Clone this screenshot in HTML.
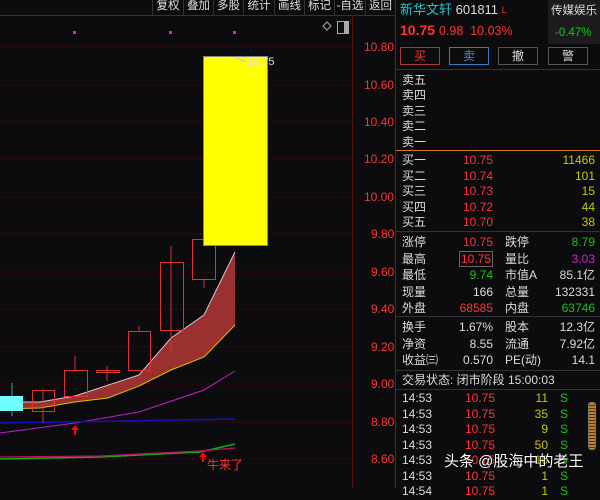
<!DOCTYPE html>
<html><head><meta charset="utf-8"><style>
*{margin:0;padding:0;box-sizing:border-box}
body{width:600px;height:488px;background:#0c0c0f;overflow:hidden;position:relative;font-family:"Liberation Sans","Noto Sans CJK SC",sans-serif;font-size:12px;color:#ddd}
.a{position:absolute;white-space:nowrap;line-height:14px}
.r{color:#ff3333}.g{color:#16c416}.y{color:#c8c800}.w{color:#dcdcdc}.m{color:#d020d0}
.tb{position:absolute;top:0;height:15px;border-left:1px solid #333;color:#ddd;font-size:11.5px;line-height:13px;text-align:center}
.btn{position:absolute;top:47px;height:18px;width:40px;border:1px solid #555;text-align:center;line-height:16px;font-size:12px}
.hl{position:absolute;left:396px;width:204px;height:1px;background:#333}
.rt{text-align:right}
</style></head><body>
<svg width="396" height="488" style="position:absolute;left:0;top:0">
<line x1="0" y1="15.5" x2="395" y2="15.5" stroke="#333"/>
<g stroke="#6a1010" stroke-dasharray="1,3">
<line x1="0" y1="47" x2="352" y2="47"/><line x1="0" y1="85" x2="352" y2="85"/><line x1="0" y1="122" x2="352" y2="122"/><line x1="0" y1="159" x2="352" y2="159"/><line x1="0" y1="197" x2="352" y2="197"/><line x1="0" y1="234" x2="352" y2="234"/><line x1="0" y1="272" x2="352" y2="272"/><line x1="0" y1="309" x2="352" y2="309"/><line x1="0" y1="347" x2="352" y2="347"/><line x1="0" y1="384" x2="352" y2="384"/><line x1="0" y1="422" x2="352" y2="422"/><line x1="0" y1="459" x2="352" y2="459"/>
</g>
<line x1="352.5" y1="15" x2="352.5" y2="488" stroke="#5a1010"/>
<rect x="73" y="31" width="3" height="3" fill="#e020e0"/><rect x="169" y="31" width="3" height="3" fill="#e020e0"/><rect x="233" y="31" width="3" height="3" fill="#e020e0"/>
<path d="M327 22 l4 4 -4 4 -4 -4z" fill="none" stroke="#aaa"/>
<rect x="337.5" y="21.5" width="11" height="12" fill="none" stroke="#aaa"/><rect x="344" y="22" width="4" height="11" fill="#aaa"/>
<polygon points="0,402 40,402 75,396 139,375 171,338 204,315 235,252 235,325 204,357 171,370 139,386 108,398 75,402 40,408 0,409" fill="#9a3030"/>
<polyline points="0,402 40,402 75,396 139,375 171,338 204,315 235,252" fill="none" stroke="#ccc" stroke-width="1"/>
<polyline points="0,409 40,408 75,402 108,398 139,386 171,370 204,357 235,325" fill="none" stroke="#d8c000" stroke-width="1"/>
<polyline points="0,433 75,423 139,412 204,390 235,371" fill="none" stroke="#c020c0" stroke-width="1"/>
<line x1="0" y1="423" x2="235" y2="419" stroke="#1010c0" stroke-width="1.5"/>
<polyline points="0,459 100,457 200,452 235,444" fill="none" stroke="#10b010" stroke-width="1.5"/>
<polyline points="0,457 100,456 200,451 235,448" fill="none" stroke="#c01060" stroke-width="1.2"/>
<line x1="12" y1="383" x2="12" y2="416" stroke="#3aa"/><rect x="0" y="396" width="23" height="15" fill="#70ffff"/>
<line x1="43" y1="389" x2="43" y2="423" stroke="#c33"/><rect x="32.5" y="390.5" width="22" height="21" fill="none" stroke="#d33"/>
<line x1="75" y1="356" x2="75" y2="370" stroke="#c33"/><rect x="64.5" y="370.5" width="23" height="26" fill="none" stroke="#d33"/>
<line x1="107" y1="366" x2="107" y2="381" stroke="#c33"/><rect x="96.5" y="370.5" width="23" height="2" fill="none" stroke="#d33"/>
<line x1="139" y1="326" x2="139" y2="331" stroke="#c33"/><rect x="128.5" y="331.5" width="22" height="39" fill="none" stroke="#d33"/>
<line x1="171" y1="246" x2="171" y2="353" stroke="#c33"/><rect x="160.5" y="262.5" width="23" height="68" fill="none" stroke="#d33"/>
<line x1="204" y1="279" x2="204" y2="288" stroke="#c33"/><rect x="192.5" y="239.5" width="23" height="40" fill="none" stroke="#d33"/>
<rect x="203.5" y="56.5" width="64" height="189" fill="#ffff00" stroke="#887"/>
<path d="M236 58 l10 4" stroke="#ccc"/>
<path d="M75 425 l-4 5 h3 v5 h2 v-5 h3z" fill="#f00"/>
<path d="M203 452 l-4 5 h3 v5 h2 v-5 h3z" fill="#f00"/>
</svg>
<div class="a w" style="left:247px;top:55px;font-size:11px">10.75</div>
<div class="a r" style="left:207px;top:458px">牛来了</div>
<div class="a r" style="left:364px;top:40px">10.80</div>
<div class="a r" style="left:364px;top:78px">10.60</div>
<div class="a r" style="left:364px;top:115px">10.40</div>
<div class="a r" style="left:364px;top:152px">10.20</div>
<div class="a r" style="left:364px;top:190px">10.00</div>
<div class="a r" style="left:371px;top:227px">9.80</div>
<div class="a r" style="left:371px;top:265px">9.60</div>
<div class="a r" style="left:371px;top:302px">9.40</div>
<div class="a r" style="left:371px;top:340px">9.20</div>
<div class="a r" style="left:371px;top:377px">9.00</div>
<div class="a r" style="left:371px;top:415px">8.80</div>
<div class="a r" style="left:371px;top:452px">8.60</div>
<div class="tb" style="left:152px;width:31px">复权</div>
<div class="tb" style="left:183px;width:30px">叠加</div>
<div class="tb" style="left:213px;width:30px">多股</div>
<div class="tb" style="left:243px;width:31px">统计</div>
<div class="tb" style="left:274px;width:30px">画线</div>
<div class="tb" style="left:304px;width:30px">标记</div>
<div class="tb" style="left:334px;width:31px">-自选</div>
<div class="tb" style="left:365px;width:30px">返回</div>
<div style="position:absolute;left:395px;top:0;width:1px;height:488px;background:#333"></div>
<div class="a" style="left:400px;top:3px;font-size:13px;color:#22c8c8">新华文轩 <span class="w">601811</span> <span class="r" style="font-size:9px;vertical-align:top">L</span></div>
<div style="position:absolute;left:548px;top:0;width:52px;height:44px;background:#1c1c1e"></div>
<div class="a w" style="left:551px;top:4px;font-size:11.5px">传媒娱乐</div>
<div class="a g" style="left:555px;top:26px;font-size:11.5px">-0.47%</div>
<div class="a r" style="left:400px;top:23px;font-size:14px;font-weight:bold">10.75 <span style="font-weight:normal;font-size:12.5px">0.98 &nbsp;10.03%</span></div>
<div class="btn r" style="left:400px;border-color:#a33">买</div>
<div class="btn" style="left:449px;border-color:#3a7ac0;color:#4a8ad0">卖</div>
<div class="btn w" style="left:498px">撤</div>
<div class="btn w" style="left:548px;width:40px">警</div>
<div class="hl" style="top:69px"></div>
<div class="a w" style="left:402px;top:73px">卖五</div>
<div class="a w" style="left:402px;top:88px">卖四</div>
<div class="a w" style="left:402px;top:104px">卖三</div>
<div class="a w" style="left:402px;top:119px">卖二</div>
<div class="a w" style="left:402px;top:135px">卖一</div>
<div class="hl" style="top:150px;background:#d08010"></div>
<div class="a w" style="left:402px;top:153px;line-height:15.6px">买一<br>买二<br>买三<br>买四<br>买五</div>
<div class="a r rt" style="left:440px;width:53px;top:153px;line-height:15.6px">10.75<br>10.74<br>10.73<br>10.72<br>10.70</div>
<div class="a y rt" style="left:540px;width:55px;top:153px;line-height:15.6px">11466<br>101<br>15<br>44<br>38</div>
<div class="hl" style="top:231px"></div>
<div class="a w" style="left:402px;top:234px;line-height:16.5px">涨停<br>最高<br>最低<br>现量<br>外盘</div>
<div class="a rt" style="left:440px;width:53px;top:234px;line-height:16.5px"><span class="r">10.75</span><br><span class="r" style="border:1px solid #666;padding:0 1px">10.75</span><br><span class="g">9.74</span><br><span class="w">166</span><br><span class="r">68585</span></div>
<div class="a w" style="left:505px;top:234px;line-height:16.5px">跌停<br>量比<br>市值A<br>总量<br>内盘</div>
<div class="a rt" style="left:530px;width:65px;top:234px;line-height:16.5px"><span class="g">8.79</span><br><span class="m">3.03</span><br><span class="w">85.1亿</span><br><span class="w">132331</span><br><span class="g">63746</span></div>
<div class="hl" style="top:316px"></div>
<div class="a w" style="left:402px;top:319px;line-height:16.5px">换手<br>净资<br>收益㈢</div>
<div class="a w rt" style="left:440px;width:53px;top:319px;line-height:16.5px">1.67%<br>8.55<br>0.570</div>
<div class="a w" style="left:505px;top:319px;line-height:16.5px">股本<br>流通<br>PE(动)</div>
<div class="a w rt" style="left:530px;width:65px;top:319px;line-height:16.5px">12.3亿<br>7.92亿<br>14.1</div>
<div class="hl" style="top:370px"></div>
<div class="a w" style="left:402px;top:373px">交易状态: 闭市阶段 15:00:03</div>
<div class="hl" style="top:389px"></div>
<div class="a w" style="left:402px;top:391px;line-height:15.5px">14:53<br>14:53<br>14:53<br>14:53<br>14:53<br>14:53<br>14:54</div>
<div class="a r rt" style="left:440px;width:55px;top:391px;line-height:15.5px">10.75<br>10.75<br>10.75<br>10.75<br>10.75<br>10.75<br>10.75</div>
<div class="a y rt" style="left:510px;width:38px;top:391px;line-height:15.5px">11<br>35<br>9<br>50<br>10<br>1<br>1</div>
<div class="a g" style="left:560px;top:391px;line-height:15.5px">S<br>S<br>S<br>S<br>S<br>S<br>S</div>
<div style="position:absolute;left:588px;top:402px;width:8px;height:48px;border:1px solid #777;border-radius:3px;background:repeating-linear-gradient(#c08020 0 2px,#503010 2px 3px)"></div>
<div class="a" style="left:444px;top:455px;font-size:15px;color:#fff;text-shadow:0 0 2px #000">头条 @股海中的老王</div>
</body></html>
